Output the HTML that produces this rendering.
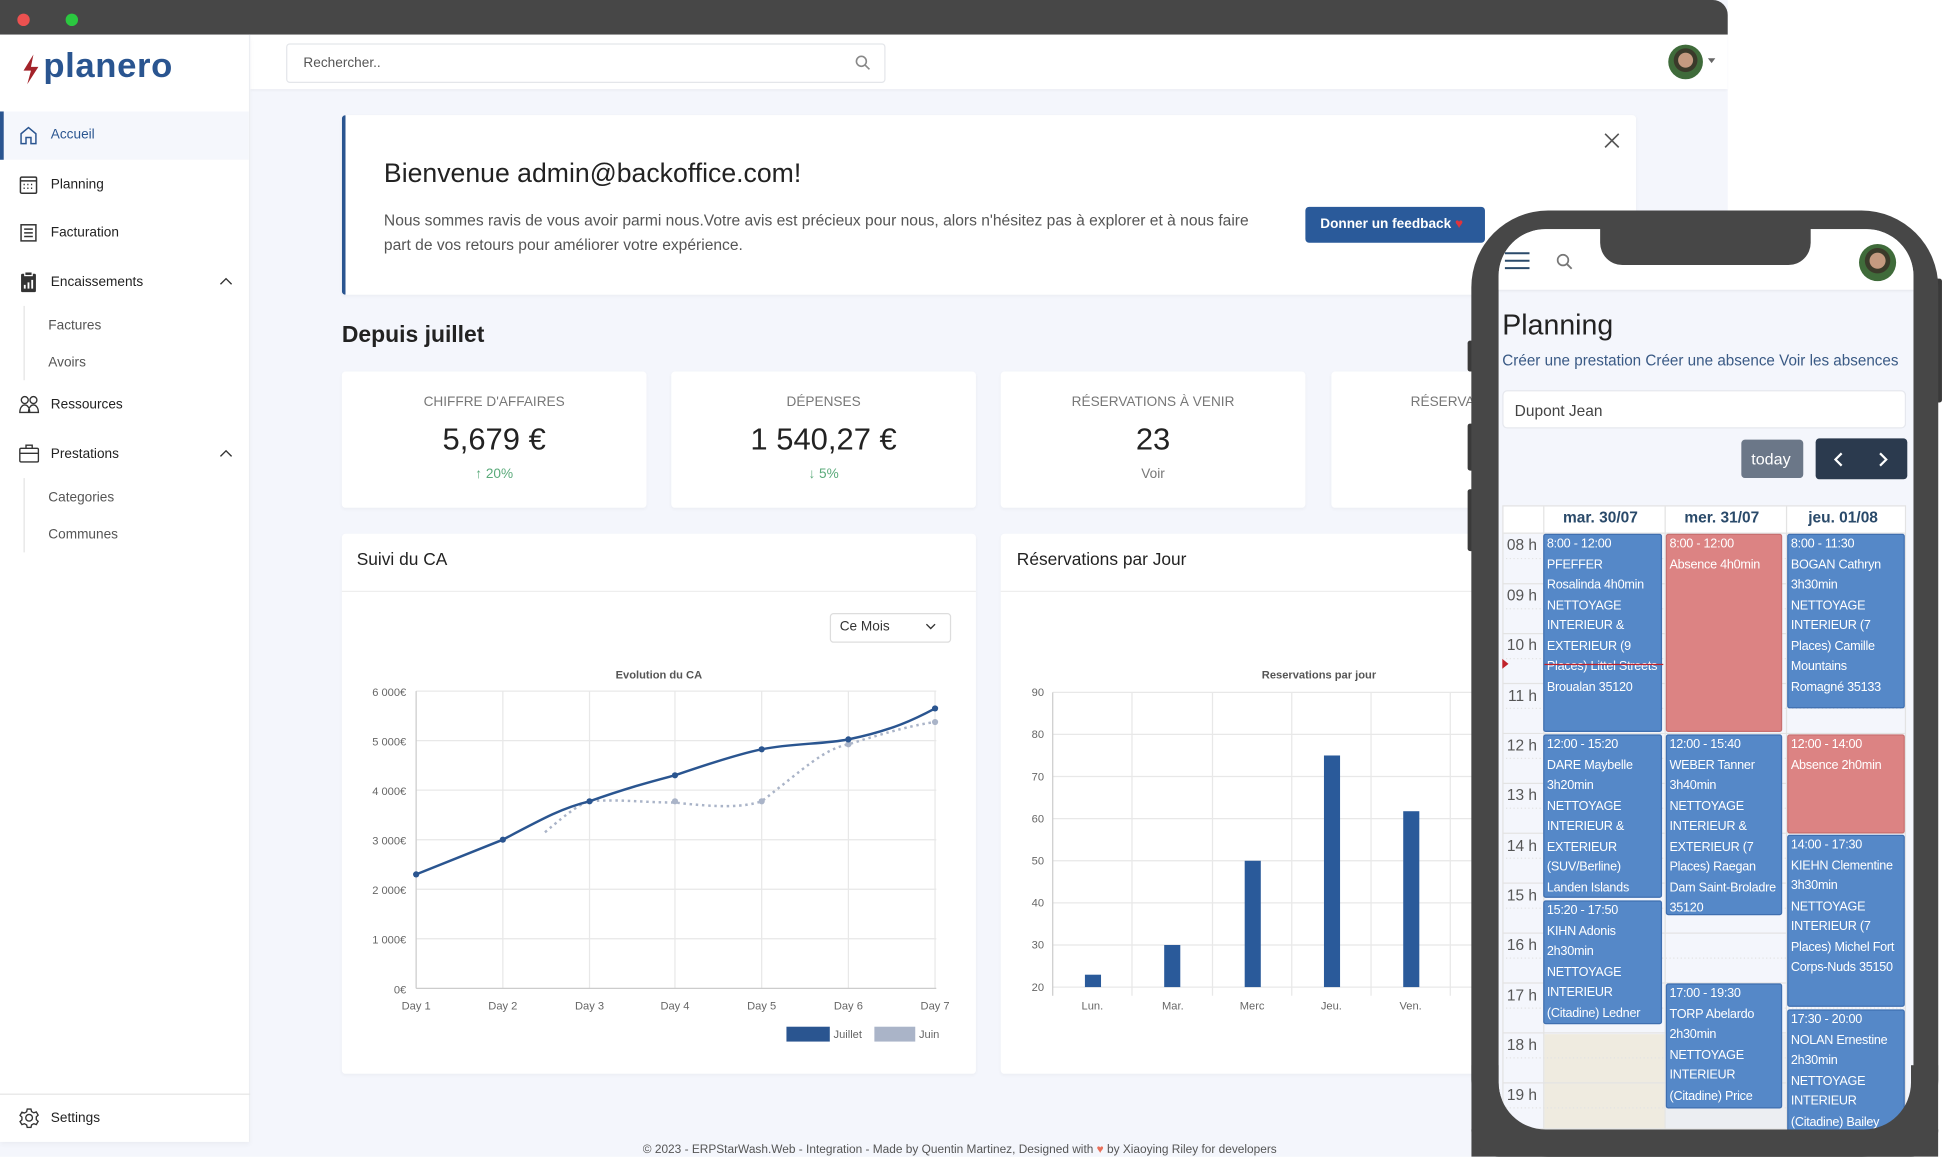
<!DOCTYPE html>
<html><head><meta charset="utf-8">
<style>
*{box-sizing:border-box;margin:0;padding:0}
html,body{width:1942px;height:1157px;overflow:hidden;background:#fff;font-family:"Liberation Sans",sans-serif}
#w{position:absolute;left:0;top:0;width:1568px;height:934px;transform:scale(1.2385);transform-origin:0 0}
.a{position:absolute}
.t{position:absolute;white-space:nowrap}
.nav{position:absolute;left:0;width:202px;font-size:11px;color:#222}
.nav span{position:absolute;left:41px}
.sub{position:absolute;left:39px;font-size:11px;color:#555}
.card{position:absolute;background:#fff;border-radius:3px;box-shadow:0 1px 3px rgba(0,0,0,.04)}
.lbl{position:absolute;width:100%;text-align:center;font-size:11px;color:#777}
.val{position:absolute;width:100%;text-align:center;font-size:25px;color:#222}
.ev{position:absolute;background:#5588c8;color:#fff;font-size:10.2px;line-height:16.5px;padding:0 2px;border-radius:2px;border:1px solid #3f6fb0;overflow:hidden;white-space:normal;letter-spacing:-0.2px}
.ev.r{background:#dc8383;border-color:#c87070}
.hr{position:absolute;left:1213px;width:32px;text-align:right;padding-right:4px;font-size:12.5px;color:#555}
</style></head><body>
<div id="w">
<div class="a" style="left:0;top:0;width:1395px;height:934px;background:#f4f6fc"></div>
<div class="a" style="left:0;top:0;width:1395px;height:28px;background:#474747;border-radius:0 12px 0 0"></div>
<div class="a" style="left:14px;top:11px;width:10px;height:10px;border-radius:50%;background:#ec5150"></div>
<div class="a" style="left:53px;top:11px;width:10px;height:10px;border-radius:50%;background:#2bc840"></div>
<div class="a" style="left:202px;top:28px;width:1193px;height:44px;background:#fff;box-shadow:0 1px 2px rgba(0,0,0,.05)"></div>
<div class="a" style="left:231px;top:35px;width:484px;height:32px;border:1px solid #e4e6ea;border-radius:3px;background:#fff"></div>
<div class="t" style="left:245px;top:45px;font-size:11px;color:#555">Rechercher..</div>
<svg class="a" style="left:690px;top:44px" width="13" height="13" viewBox="0 0 13 13"><circle cx="5.5" cy="5.5" r="4" fill="none" stroke="#888" stroke-width="1.3"/><path d="M8.5 8.5L12 12" stroke="#888" stroke-width="1.3"/></svg>
<div class="a" style="left:1347px;top:36px;width:28px;height:28px;border-radius:50%;background:radial-gradient(circle at 50% 45%,#c49a80 0 28%,#3a3a2a 30% 45%,#3f6b3a 47%);"></div>
<div class="a" style="left:1379px;top:47px;border:3px solid transparent;border-top:4px solid #666"></div>
<div class="a" style="left:0;top:28px;width:202px;height:894px;background:#fff;border-right:1px solid #eceef2;box-shadow:0 2px 4px rgba(0,0,0,.04)"></div>
<svg class="a" style="left:16px;top:43px" width="18" height="26" viewBox="0 0 18 26"><path d="M11 1L3 14h6l-3 11 9-14H9z" fill="#a3232a"/></svg>
<div class="t" style="left:35px;top:37px;font-size:28px;font-weight:bold;color:#2a5590;letter-spacing:0.5px">planero</div>
<div class="a" style="left:0;top:90px;width:201px;height:39px;background:#f5f7fc;border-left:3px solid #2a5590"></div>
<div class="nav" style="top:103px;color:#2a5590"><span>Accueil</span></div>
<svg class="a" style="left:15px;top:101px" width="16" height="16" viewBox="0 0 16 16" fill="none" stroke="#2a5590" stroke-width="1.2"><path d="M2 7L8 2l6 5v8h-4v-5H6v5H2z"/></svg>
<div class="nav" style="top:143px"><span>Planning</span></div>
<svg class="a" style="left:15px;top:141px" width="16" height="16" viewBox="0 0 16 16" fill="none" stroke="#333" stroke-width="1.2"><rect x="1.5" y="2" width="13" height="13" rx="1"/><path d="M1.5 5h13M4 8h1M7 8h1M10 8h1M4 11h1M7 11h1M10 11h1"/></svg>
<div class="nav" style="top:182px"><span>Facturation</span></div>
<svg class="a" style="left:15px;top:180px" width="16" height="16" viewBox="0 0 16 16" fill="none" stroke="#333" stroke-width="1.2"><rect x="2" y="1.5" width="12" height="13"/><path d="M4.5 5h7M4.5 8h7M4.5 11h7"/></svg>
<div class="nav" style="top:222px"><span>Encaissements</span></div>
<svg class="a" style="left:15px;top:219px" width="16" height="17" viewBox="0 0 16 17"><rect x="2" y="2" width="12" height="15" rx="1" fill="#333"/><rect x="5" y="0.5" width="6" height="3" fill="#333" stroke="#fff"/><path d="M5 14v-3M8 14v-5M11 14v-7" stroke="#fff" stroke-width="1.5"/></svg>
<svg class="a" style="left:177px;top:223px" width="11" height="8" viewBox="0 0 11 8"><path d="M1 6.5L5.5 2 10 6.5" fill="none" stroke="#333" stroke-width="1.1"/></svg>
<div class="a" style="left:19px;top:247px;width:1px;height:60px;background:#e4e4e4"></div>
<div class="sub" style="top:257px">Factures</div>
<div class="sub" style="top:287px">Avoirs</div>
<div class="nav" style="top:321px"><span>Ressources</span></div>
<svg class="a" style="left:15px;top:319px" width="17" height="15" viewBox="0 0 17 15" fill="none" stroke="#333" stroke-width="1.1"><circle cx="5" cy="4" r="2.8"/><circle cx="12" cy="4" r="2.8"/><path d="M1 14c0-4 2-6 4-6s4 2 4 6zM8 14c0-4 2-6 4-6s4 2 4 6z"/></svg>
<div class="nav" style="top:361px"><span>Prestations</span></div>
<svg class="a" style="left:15px;top:358px" width="17" height="16" viewBox="0 0 17 16" fill="none" stroke="#333" stroke-width="1.1"><rect x="1" y="4" width="15" height="11" rx="1"/><path d="M6 4V1.5h5V4M1 8h15"/></svg>
<svg class="a" style="left:177px;top:362px" width="11" height="8" viewBox="0 0 11 8"><path d="M1 6.5L5.5 2 10 6.5" fill="none" stroke="#333" stroke-width="1.1"/></svg>
<div class="a" style="left:19px;top:386px;width:1px;height:60px;background:#e4e4e4"></div>
<div class="sub" style="top:396px">Categories</div>
<div class="sub" style="top:426px">Communes</div>
<div class="a" style="left:0;top:883px;width:202px;height:1px;background:#e6e6e6"></div>
<svg class="a" style="left:15px;top:894px" width="17" height="17" viewBox="0 0 17 17" fill="none" stroke="#333" stroke-width="1.1"><circle cx="8.5" cy="8.5" r="2.7"/><path d="M7 1.5h3l.5 2 1.8 1 2-.7 1.5 2.6-1.5 1.4v2.2l1.5 1.4-1.5 2.6-2-.7-1.8 1-.5 2H7l-.5-2-1.8-1-2 .7L1.2 11.6l1.5-1.4V8L1.2 6.6 2.7 4l2 .7 1.8-1z"/></svg>
<div class="nav" style="top:897px"><span>Settings</span></div>
<div class="card" style="left:276px;top:93px;width:1045px;height:145px;border-left:3px solid #2a5590"></div>
<div class="t" style="left:310px;top:128px;font-size:21.5px;color:#222">Bienvenue admin@backoffice.com!</div>
<div class="t" style="left:310px;top:168px;font-size:12.6px;color:#555;line-height:20px;white-space:normal;width:720px">Nous sommes ravis de vous avoir parmi nous.Votre avis est précieux pour nous, alors n'hésitez pas à explorer et à nous faire part de vos retours pour améliorer votre expérience.</div>
<div class="a" style="left:1054px;top:167px;width:145px;height:29px;background:#2a5a9a;border-radius:3px"></div>
<div class="t" style="left:1066px;top:175px;font-size:11px;font-weight:bold;color:#fff">Donner un feedback <span style="color:#e0343c">&#9829;</span></div>
<svg class="a" style="left:1295px;top:107px" width="13" height="13" viewBox="0 0 13 13"><path d="M1 1l11 11M12 1L1 12" stroke="#555" stroke-width="1.3"/></svg>
<div class="t" style="left:276px;top:259px;font-size:18.5px;font-weight:bold;color:#222">Depuis juillet</div>
<div class="card" style="left:276px;top:300px;width:246px;height:110px"><div class="lbl" style="top:19px">CHIFFRE D'AFFAIRES</div><div class="val" style="top:41px">5,679 €</div><div class="lbl" style="top:77px;color:#5aaa7a">&#8593; 20%</div></div>
<div class="card" style="left:542px;top:300px;width:246px;height:110px"><div class="lbl" style="top:19px">DÉPENSES</div><div class="val" style="top:41px">1 540,27 €</div><div class="lbl" style="top:77px;color:#5aaa7a">&#8595; 5%</div></div>
<div class="card" style="left:808px;top:300px;width:246px;height:110px"><div class="lbl" style="top:19px">RÉSERVATIONS À VENIR</div><div class="val" style="top:41px">23</div><div class="lbl" style="top:77px">Voir</div></div>
<div class="card" style="left:1075px;top:300px;width:246px;height:110px"><div class="t" style="left:64px;top:19px;font-size:11px;color:#777">RÉSERVATIONS</div></div>
<div class="card" style="left:276px;top:431px;width:512px;height:436px"></div>
<div class="a" style="left:276px;top:477px;width:512px;height:1px;background:#eee"></div>
<div class="t" style="left:288px;top:443px;font-size:14px;color:#222">Suivi du CA</div>
<div class="card" style="left:808px;top:431px;width:500px;height:436px"></div>
<div class="a" style="left:808px;top:477px;width:500px;height:1px;background:#eee"></div>
<div class="t" style="left:821px;top:443px;font-size:14px;color:#222">Réservations par Jour</div>
<div class="a" style="left:670px;top:495px;width:98px;height:24px;border:1px solid #ddd;border-radius:3px;background:#fff"></div>
<div class="t" style="left:678px;top:500px;font-size:11px;color:#333">Ce Mois</div>
<svg class="a" style="left:747px;top:503px" width="9" height="6" viewBox="0 0 9 6"><path d="M1 1l3.5 3.5L8 1" fill="none" stroke="#333" stroke-width="1.1"/></svg>
<svg class="a" style="left:276px;top:530px" width="512" height="320" viewBox="276 530 512 320" font-family="Liberation Sans" font-size="9" fill="#666">
<text x="532" y="548" text-anchor="middle" font-weight="bold" fill="#555">Evolution du CA</text>
<g stroke="#e8e8e8"><path d="M336 558h420M336 598h420M336 638h420M336 678h420M336 718h420M336 758h420"/><path d="M406 558v240M476 558v240M545 558v240M615 558v240M685 558v240M755 558v240"/></g>
<path d="M336 558v240M336 798h420" stroke="#ccc"/>
<g text-anchor="end"><text x="328" y="562">6 000€</text><text x="328" y="602">5 000€</text><text x="328" y="642">4 000€</text><text x="328" y="682">3 000€</text><text x="328" y="722">2 000€</text><text x="328" y="762">1 000€</text><text x="328" y="802">0€</text></g>
<g text-anchor="middle"><text x="336" y="815">Day 1</text><text x="406" y="815">Day 2</text><text x="476" y="815">Day 3</text><text x="545" y="815">Day 4</text><text x="615" y="815">Day 5</text><text x="685" y="815">Day 6</text><text x="755" y="815">Day 7</text></g>
<path d="M440 672C460 655 470 648 476 647C500 645 520 648 545 648C580 652 600 652 615 647C650 620 665 605 685 601C720 590 740 585 755 583" fill="none" stroke="#aab4c8" stroke-width="2" stroke-dasharray="2 3"/>
<g fill="#aab4c8"><circle cx="545" cy="647" r="2.5"/><circle cx="615" cy="647" r="2.5"/><circle cx="685" cy="601" r="2.5"/><circle cx="755" cy="583" r="2.5"/></g>
<path d="M336 706L406 678C440 660 455 652 476 647C510 635 530 630 545 626C580 614 600 608 615 605C640 600 665 601 685 597C720 590 740 580 755 572" fill="none" stroke="#2a5590" stroke-width="2"/>
<g fill="#2a5590"><circle cx="336" cy="706" r="2.5"/><circle cx="406" cy="678" r="2.5"/><circle cx="476" cy="647" r="2.5"/><circle cx="545" cy="626" r="2.5"/><circle cx="615" cy="605" r="2.5"/><circle cx="685" cy="597" r="2.5"/><circle cx="755" cy="572" r="2.5"/></g>
<rect x="635" y="829" width="35" height="12" fill="#2a5590"/><text x="673" y="838">Juillet</text>
<rect x="706" y="829" width="33" height="12" fill="#aab4c8"/><text x="742" y="838">Juin</text>
</svg>
<svg class="a" style="left:808px;top:530px" width="400" height="300" viewBox="808 530 400 300" font-family="Liberation Sans" font-size="9" fill="#666">
<text x="1065" y="548" text-anchor="middle" font-weight="bold" fill="#555">Reservations par jour</text>
<g stroke="#e8e8e8"><path d="M850 559h360M850 593h360M850 627h360M850 661h360M850 695h360M850 729h360M850 763h360M850 797h360"/><path d="M914 559v245M979 559v245M1043 559v245M1107 559v245M1171 559v245"/></g>
<path d="M850 559v245" stroke="#ccc"/>
<g text-anchor="end"><text x="843" y="562">90</text><text x="843" y="596">80</text><text x="843" y="630">70</text><text x="843" y="664">60</text><text x="843" y="698">50</text><text x="843" y="732">40</text><text x="843" y="766">30</text><text x="843" y="800">20</text></g>
<g fill="#2a5a9a"><rect x="876" y="787" width="13" height="10"/><rect x="940" y="763" width="13" height="34"/><rect x="1005" y="695" width="13" height="102"/><rect x="1069" y="610" width="13" height="187"/><rect x="1133" y="655" width="13" height="142"/></g>
<g text-anchor="middle"><text x="882" y="815">Lun.</text><text x="947" y="815">Mar.</text><text x="1011" y="815">Merc</text><text x="1075" y="815">Jeu.</text><text x="1139" y="815">Ven.</text></g>
</svg>
<div class="t" style="left:519px;top:923px;font-size:9.6px;color:#555">© 2023 - ERPStarWash.Web - Integration - Made by Quentin Martinez, Designed with <span style="color:#e8705a">&#9829;</span> by Xiaoying Riley for developers</div>
<div class="a" style="left:1185px;top:275px;width:8px;height:25px;background:#3a3a3a;border-radius:2px"></div>
<div class="a" style="left:1185px;top:342px;width:8px;height:38px;background:#3a3a3a;border-radius:2px"></div>
<div class="a" style="left:1185px;top:395px;width:8px;height:50px;background:#3a3a3a;border-radius:2px"></div>
<div class="a" style="left:1559px;top:225px;width:9px;height:100px;background:#3a3a3a;border-radius:2px"></div>
<div class="a" style="left:1188px;top:170px;width:377px;height:764px;background:#474747;border-radius:62px"></div>
<div class="a" style="left:1210px;top:185px;width:335px;height:727px;background:#f4f6fc;border-radius:38px;overflow:hidden">
 <div class="a" style="left:0;top:0;width:335px;height:49px;background:#fff;box-shadow:0 1px 2px rgba(0,0,0,.08)"></div>
</div>
<div class="a" style="left:1292px;top:183px;width:170px;height:31px;background:#474747;border-radius:0 0 18px 18px"></div>
<svg class="a" style="left:1215px;top:203px" width="20" height="15" viewBox="0 0 20 15"><path d="M0 1.5h20M0 7.5h20M0 13.5h20" stroke="#2a4a6a" stroke-width="1.6"/></svg>
<svg class="a" style="left:1256px;top:204px" width="14" height="14" viewBox="0 0 14 14"><circle cx="6" cy="6" r="4.3" fill="none" stroke="#777" stroke-width="1.4"/><path d="M9 9l4 4" stroke="#777" stroke-width="1.5"/></svg>
<div class="a" style="left:1501px;top:197px;width:30px;height:30px;border-radius:50%;background:radial-gradient(circle at 50% 45%,#c49a80 0 28%,#3a3a2a 30% 45%,#3f6b3a 47%)"></div>
<div class="t" style="left:1213px;top:249px;font-size:23px;color:#222">Planning</div>
<div class="t" style="left:1213px;top:284px;font-size:12.3px;color:#3a5a85">Créer une prestation Créer une absence Voir les absences</div>
<div class="a" style="left:1213px;top:315px;width:326px;height:31px;background:#fff;border:1px solid #e6e8ee;border-radius:4px"></div>
<div class="t" style="left:1223px;top:325px;font-size:12.5px;color:#444">Dupont Jean</div>
<div class="a" style="left:1406px;top:355px;width:50px;height:31px;background:#6b7788;border-radius:3px"></div>
<div class="t" style="left:1414px;top:363px;font-size:13px;color:#fff">today</div>
<div class="a" style="left:1466px;top:354px;width:74px;height:33px;background:#2b3a4e;border-radius:3px"></div>
<svg class="a" style="left:1478px;top:364px" width="50" height="14" viewBox="0 0 50 14"><path d="M9 2L4 7l5 5M40 2l5 5-5 5" fill="none" stroke="#fff" stroke-width="1.8"/></svg>
<div class="a" style="left:1213px;top:408px;width:326px;height:504px;background:#f4f6fc;border:1px solid #e3e3e3;overflow:hidden">
 <div class="a" style="left:0;top:0;width:326px;height:22px;background:#fff;border-bottom:1px solid #e3e3e3"></div>
 <div class="a" style="left:32px;top:0;width:1px;height:504px;background:#e3e3e3"></div>
 <div class="a" style="left:130px;top:0;width:1px;height:504px;background:#e3e3e3"></div>
 <div class="a" style="left:228px;top:0;width:1px;height:504px;background:#e3e3e3"></div>
 <div class="a" style="left:33px;top:426px;width:97px;height:80px;background:#efebe0"></div>
 <div class="a" style="left:131px;top:426px;width:97px;height:80px;background:#eceef2"></div>
</div>
<div class="t" style="left:1262px;top:411px;font-size:12.5px;font-weight:bold;color:#2a4a6a">mar. 30/07</div>
<div class="t" style="left:1360px;top:411px;font-size:12.5px;font-weight:bold;color:#2a4a6a">mer. 31/07</div>
<div class="t" style="left:1460px;top:411px;font-size:12.5px;font-weight:bold;color:#2a4a6a">jeu. 01/08</div>
<svg class="a" style="left:1213px;top:431px" width="326" height="480"><g stroke="#e3e3e3"><path d="M0 40.3h326M0 80.6h326M0 120.9h326M0 161.2h326M0 201.5h326M0 241.8h326M0 282.1h326M0 322.4h326M0 362.7h326M0 403h326M0 443.3h326"/></g><g stroke="#e3e3e3" stroke-dasharray="1 2"><path d="M0 20h326M0 60.5h326M0 100.8h326M0 141h326M0 181.3h326M0 221.6h326M0 262h326M0 302.3h326M0 342.6h326M0 383h326M0 423.2h326M0 463.5h326"/></g></svg>
<div class="hr" style="top:433px">08 h</div><div class="hr" style="top:474px">09 h</div><div class="hr" style="top:514px">10 h</div><div class="hr" style="top:555px">11 h</div><div class="hr" style="top:595px">12 h</div><div class="hr" style="top:635px">13 h</div><div class="hr" style="top:676px">14 h</div><div class="hr" style="top:716px">15 h</div><div class="hr" style="top:756px">16 h</div><div class="hr" style="top:797px">17 h</div><div class="hr" style="top:837px">18 h</div><div class="hr" style="top:877px">19 h</div>
<div class="ev" style="left:1246px;top:431px;width:96px;height:160px">8:00 - 12:00<br>PFEFFER Rosalinda 4h0min NETTOYAGE INTERIEUR &amp; EXTERIEUR (9 Places) Littel Streets Broualan 35120</div>
<div class="ev" style="left:1246px;top:593px;width:96px;height:132px">12:00 - 15:20<br>DARE Maybelle 3h20min NETTOYAGE INTERIEUR &amp; EXTERIEUR (SUV/Berline) Landen Islands</div>
<div class="ev" style="left:1246px;top:727px;width:96px;height:100px">15:20 - 17:50<br>KIHN Adonis 2h30min NETTOYAGE INTERIEUR (Citadine) Ledner</div>
<div class="ev r" style="left:1345px;top:431px;width:94px;height:160px">8:00 - 12:00<br>Absence 4h0min</div>
<div class="ev" style="left:1345px;top:593px;width:94px;height:146px">12:00 - 15:40<br>WEBER Tanner 3h40min NETTOYAGE INTERIEUR &amp; EXTERIEUR (7 Places) Raegan Dam Saint-Broladre 35120</div>
<div class="ev" style="left:1345px;top:794px;width:94px;height:101px">17:00 - 19:30<br>TORP Abelardo 2h30min NETTOYAGE INTERIEUR (Citadine) Price</div>
<div class="ev" style="left:1443px;top:431px;width:95px;height:141px">8:00 - 11:30<br>BOGAN Cathryn 3h30min NETTOYAGE INTERIEUR (7 Places) Camille Mountains Romagné 35133</div>
<div class="ev r" style="left:1443px;top:593px;width:95px;height:80px">12:00 - 14:00<br>Absence 2h0min</div>
<div class="ev" style="left:1443px;top:674px;width:95px;height:139px">14:00 - 17:30<br>KIEHN Clementine 3h30min NETTOYAGE INTERIEUR (7 Places) Michel Fort Corps-Nuds 35150</div>
<div class="ev" style="left:1443px;top:815px;width:95px;height:100px">17:30 - 20:00<br>NOLAN Ernestine 2h30min NETTOYAGE INTERIEUR (Citadine) Bailey</div>
<div class="a" style="left:1247px;top:536px;width:96px;height:1px;background:#c0222a"></div>
<div class="a" style="left:1213px;top:532px;border:4px solid transparent;border-left:5px solid #c0222a;border-right:0"></div>
<svg class="a" style="left:1188px;top:860px" width="377" height="74" viewBox="0 0 377 74"><path d="M22 0v14a38 38 0 0 0 38 38h257a38 38 0 0 0 38-38V0h22v74H0V0z" fill="#474747"/></svg>
<div class="a" style="left:1188px;top:912px;width:377px;height:22px;background:#474747;border-radius:0 0 50px 50px"></div>
</div>
</body></html>
